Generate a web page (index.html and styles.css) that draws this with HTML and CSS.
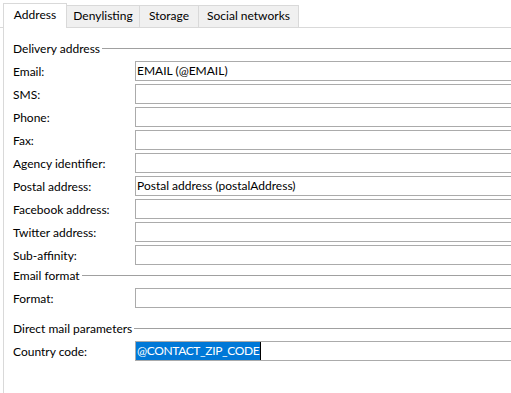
FILE: index.html
```html
<!DOCTYPE html>
<html>
<head>
<meta charset="utf-8">
<link rel="stylesheet" href="styles.css">
</head>
<body>
<div class="window">
  <div class="tabs">
    <div class="tab active tab-address">Address</div>
    <div class="tab tab-deny">Denylisting</div>
    <div class="tab tab-storage">Storage</div>
    <div class="tab tab-social">Social networks</div>
  </div>
  <div class="panel">
    <div class="group">
      <div class="group-title"><span>Delivery address</span><span class="rule"></span></div>
      <div class="row"><span class="label">Email:</span><div class="field">EMAIL (@EMAIL)</div></div>
      <div class="row"><span class="label">SMS:</span><div class="field"></div></div>
      <div class="row"><span class="label">Phone:</span><div class="field"></div></div>
      <div class="row"><span class="label">Fax:</span><div class="field"></div></div>
      <div class="row"><span class="label">Agency identifier:</span><div class="field"></div></div>
      <div class="row"><span class="label">Postal address:</span><div class="field">Postal address (postalAddress)</div></div>
      <div class="row"><span class="label">Facebook address:</span><div class="field"></div></div>
      <div class="row"><span class="label">Twitter address:</span><div class="field"></div></div>
      <div class="row"><span class="label">Sub-affinity:</span><div class="field"></div></div>
    </div>
    <div class="group">
      <div class="group-title"><span>Email format</span><span class="rule"></span></div>
      <div class="row"><span class="label">Format:</span><div class="field"></div></div>
    </div>
    <div class="group group-spaced">
      <div class="group-title"><span>Direct mail parameters</span><span class="rule"></span></div>
      <div class="row"><span class="label">Country code:</span><div class="field"><span class="selected">@CONTACT_ZIP_CODE</span><span class="caret"></span></div></div>
    </div>
  </div>
</div>
</body>
</html>
```

FILE: styles.css
```css
html, body {
  margin: 0;
  padding: 0;
  background: #ffffff;
  overflow: hidden;
}

body {
  font-family: Lato, "Liberation Sans", sans-serif;
  font-size: 12px;
  color: #000000;
}

.window {
  width: 100%;
  height: 393px;
  display: flex;
  flex-direction: column;
}

.tabs {
  display: flex;
  align-items: flex-end;
  height: 27px;
  padding-left: 3px;
  border-bottom: 1px solid #d9d9d9;
}

.tab {
  box-sizing: border-box;
  height: 22px;
  line-height: 20px;
  text-align: center;
  background: #f0f0f0;
  border: 1px solid #d9d9d9;
  border-bottom: none;
  margin-left: -1px;
  white-space: nowrap;
}

.tab-address { width: 64px; margin-left: 0; }
.tab-deny { width: 74px; }
.tab-storage { width: 60px; }
.tab-social { width: 101px; }

.tab.active {
  position: relative;
  z-index: 1;
  height: 25px;
  margin-bottom: -1px;
  line-height: 22px;
  background: #ffffff;
}

.panel {
  flex: 1;
  margin-left: 3px;
  border-left: 1px solid #d9d9d9;
  padding: 13px 0 0 9px;
}

.group-title {
  display: flex;
  align-items: center;
  height: 15px;
  margin-bottom: 5px;
}

.group-title .rule {
  flex: 1;
  height: 1px;
  margin-left: 2px;
  background: #a0a0a0;
}

.group + .group {
  margin-top: 3px;
}

.group.group-spaced {
  margin-top: 13px;
}

.row {
  display: flex;
  align-items: center;
  height: 20px;
  margin-bottom: 3px;
}

.label {
  width: 122px;
  flex: none;
}

.field {
  flex: 1;
  min-width: 0;
  box-sizing: border-box;
  height: 20px;
  border: 1px solid #ababab;
  border-right: none;
  padding-left: 1px;
  line-height: 18px;
  white-space: nowrap;
  overflow: hidden;
  display: flex;
  align-items: stretch;
}

.selected {
  background: #0078d7;
  color: #ffffff;
  margin-left: -1px;
  padding: 0 1px 0 1px;
  letter-spacing: -0.35px;
}

.caret {
  width: 1px;
  background: #000000;
}
```
